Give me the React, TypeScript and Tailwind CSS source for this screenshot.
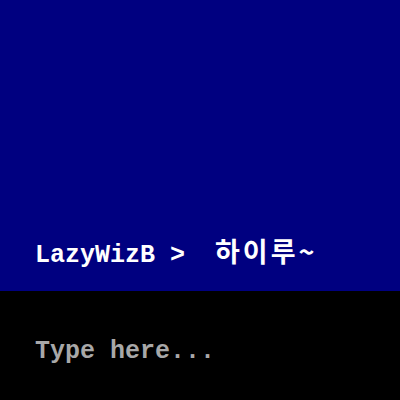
export default function App() {
    return (
        <div className="h-[400px] w-[400px] flex flex-col font-['Liberation_Mono','Noto_Sans_CJK_KR',monospace] font-bold">
            {/* Output area */}
            <div className="flex-1 bg-[#000080] flex items-end px-[35px] pb-[20px]">
                <p className="text-[25px] leading-[30px] text-white whitespace-pre">
                    LazyWizB &gt;  <span className="font-['Noto_Sans_CJK_KR',sans-serif] text-[27px] tracking-[3px]">하이루~</span>
                </p>
            </div>

            {/* Input area */}
            <div className="h-[109px] bg-black px-[35px] pt-[46px]">
                <p className="text-[25px] leading-[30px] text-[#a8a8a8] whitespace-pre">Type here...</p>
            </div>
        </div>
    )
}
